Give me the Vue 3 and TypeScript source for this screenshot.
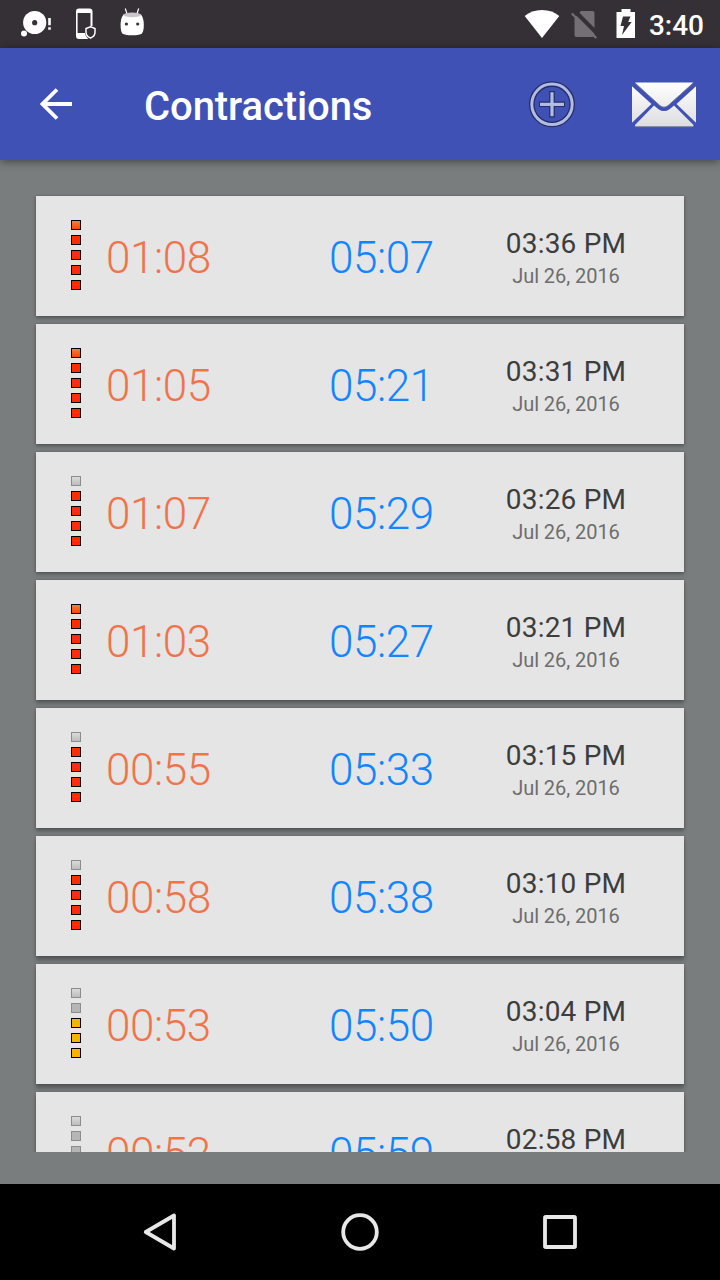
<script setup lang="ts">
type Tone = 'red' | 'amber' | 'grey'

interface Contraction {
  duration: string
  interval: string
  time: string
  date: string
  level: number
  tone: Tone
}

const METER_SIZE = 5

const contractions: Contraction[] = [
  { duration: '01:08', interval: '05:07', time: '03:36 PM', date: 'Jul 26, 2016', level: 5, tone: 'red' },
  { duration: '01:05', interval: '05:21', time: '03:31 PM', date: 'Jul 26, 2016', level: 5, tone: 'red' },
  { duration: '01:07', interval: '05:29', time: '03:26 PM', date: 'Jul 26, 2016', level: 4, tone: 'red' },
  { duration: '01:03', interval: '05:27', time: '03:21 PM', date: 'Jul 26, 2016', level: 5, tone: 'red' },
  { duration: '00:55', interval: '05:33', time: '03:15 PM', date: 'Jul 26, 2016', level: 4, tone: 'red' },
  { duration: '00:58', interval: '05:38', time: '03:10 PM', date: 'Jul 26, 2016', level: 4, tone: 'red' },
  { duration: '00:53', interval: '05:50', time: '03:04 PM', date: 'Jul 26, 2016', level: 3, tone: 'amber' },
  { duration: '00:52', interval: '05:59', time: '02:58 PM', date: 'Jul 26, 2016', level: 2, tone: 'amber' },
]

function cellTone(item: Contraction, cell: number): Tone {
  return cell > METER_SIZE - item.level ? item.tone : 'grey'
}

function cardShadow(index: number): string {
  const drop = (1.5 + index * 0.4).toFixed(1)
  return `0 ${drop}px 4px rgba(0, 0, 0, 0.3), 0 0 2px rgba(0, 0, 0, 0.22)`
}
</script>

<template>
  <div class="screen">
    <div class="status">
      <svg class="status-icons" width="150" height="48" viewBox="0 0 150 48">
        <circle cx="34.7" cy="22.5" r="11.6" fill="#fff" />
        <circle cx="34.7" cy="22.7" r="2.6" fill="#352f36" />
        <circle cx="24" cy="33.4" r="3" fill="#fff" />
        <path d="M48.2 18h2.6v7.2h-2.6zM48.2 27.2h2.6v2.6h-2.6z" fill="#fff" />
        <path d="M79 8.500h10.500a3 3 0 0 1 3 3V26h-2V13H77.600v20h7.200q.6 3.400 3.400 6H79a3 3 0 0 1-3-3V11.500a3 3 0 0 1 3-3z" fill="#fff" />
        <path d="M90.500 26.700l4.500 1.800v3.700q0 4-4.500 5.800-4.500-1.800-4.500-5.800v-3.700z" fill="#352f36" stroke="#fff" stroke-width="1.500" />
        <path d="M125.300 8.500l1.600 5M138.700 8.500l-1.600 5" stroke="#fff" stroke-width="1.200" />
        <path d="M123.500 14.500Q132.200 11.500 141 14.500 143.800 18 143.800 25 143.800 31 142 33.300 140 35.300 132.200 35.300 124.500 35.300 122.300 33.300 120.600 31 120.600 25 120.600 18 123.500 14.500z" fill="#fff" />
        <ellipse cx="132.200" cy="14.900" rx="8.700" ry="2.400" fill="#c8c6c8" />
        <circle cx="126.400" cy="24" r="1.600" fill="#352f36" />
        <circle cx="137.700" cy="24" r="1.600" fill="#352f36" />
      </svg>
      <div class="status-right">
        <svg width="36" height="48" viewBox="0 0 36 48">
          <path d="M.7 16Q7.500 10 18 10t17.300 6L18 38z" fill="#fff" />
        </svg>
        <svg width="28" height="48" viewBox="0 0 28 48">
          <path d="M10 11h11.500a2 2 0 0 1 2 2v22a2 2 0 0 1-2 2H5.500a2 2 0 0 1-2-2V18z" fill="#736f74" />
          <path d="M1.800 12l24.800 25" stroke="#352f36" stroke-width="4" transform="translate(1.500 -1.500)" />
          <path d="M.8 13.500l24.500 24.500" stroke="#736f74" stroke-width="2.300" />
        </svg>
        <svg width="20" height="48" viewBox="0 0 20 48">
          <path d="M5.500 9h9v3H19v26H.500V12h5z" fill="#fff" />
          <path d="M7 16.500h7.500l-2.300 5.500h3.500L6 35l2-9H4.500z" fill="#352f36" />
        </svg>
        <span class="clock">3:40</span>
      </div>
    </div>

    <header class="bar">
      <svg class="back" width="32" height="32" viewBox="0 0 32 32">
        <path d="M17 1.500L2.500 16 17 30.500M2 16h30" fill="none" stroke="#fff" stroke-width="3.800" />
      </svg>
      <h1 class="title">Contractions</h1>
      <svg class="add" width="48" height="48" viewBox="0 0 48 48">
        <circle cx="24" cy="24.300" r="20.200" fill="none" stroke="#232e68" stroke-width="5.600" />
        <path d="M24 11v26.500M11 24.300h26" stroke="#232e68" stroke-width="5.600" />
        <circle cx="24" cy="24.300" r="20.200" fill="none" stroke="#b4bbe2" stroke-width="3" />
        <path d="M24 12.300v24M12 24.300h24" stroke="#b4bbe2" stroke-width="3.200" />
      </svg>
      <svg class="mail" width="64" height="46" viewBox="0 0 64 46">
        <defs>
          <linearGradient id="paper" x1="0" y1="0" x2="0" y2="46" gradientUnits="userSpaceOnUse">
            <stop offset="0" stop-color="#fff" />
            <stop offset="1" stop-color="#dcdce0" />
          </linearGradient>
        </defs>
        <g fill="url(#paper)">
          <path d="M3 .5h58.300L36.500 23.200q-4.500 4-9 0z" />
          <path d="M0 4.200L19.500 22 0 40.800z" />
          <path d="M64 4.200L44.500 22 64 40.800z" />
          <path d="M22 23.500l4.500 3.700q5.500 3.700 11 0L42 23.500 61.500 43q.5 1.700-1.500 1.700H4.500q-2 0-1.500-1.700z" />
        </g>
        <path d="M3 1.500l24.500 21.700q4.500 4 9 0L61 1.500" fill="none" stroke="#707488" stroke-width=".9" />
        <path d="M3.500 44.700h57" stroke="#7c8199" stroke-width="1" />
      </svg>
    </header>

    <main class="content">
      <div class="list">
        <article v-for="(item, index) in contractions" :key="item.time" class="card" :style="{ boxShadow: cardShadow(index) }">
          <div class="meter">
            <span v-for="cell in METER_SIZE" :key="cell" class="cell" :class="[cellTone(item, cell), { top: cell === 1 }]" />
          </div>
          <span class="duration">{{ item.duration }}</span>
          <span class="interval">{{ item.interval }}</span>
          <div class="when">
            <span class="time">{{ item.time }}</span>
            <span class="date">{{ item.date }}</span>
          </div>
        </article>
      </div>
    </main>

    <nav class="nav">
      <svg width="40" height="40" viewBox="0 0 40 40">
        <path d="M34 3.500v33L5.800 20z" fill="none" stroke="#e8e8e8" stroke-width="3.800" stroke-linejoin="round" />
      </svg>
      <svg width="40" height="40" viewBox="0 0 40 40">
        <circle cx="20" cy="20" r="16.800" fill="none" stroke="#e8e8e8" stroke-width="3.800" />
      </svg>
      <svg width="40" height="40" viewBox="0 0 40 40">
        <rect x="5" y="5" width="30" height="30" rx=".8" fill="none" stroke="#e8e8e8" stroke-width="3.800" />
      </svg>
    </nav>
  </div>
</template>

<style>
body {
  margin: 0;
}
</style>

<style scoped>
.screen {
  width: 720px;
  height: 1280px;
  display: flex;
  flex-direction: column;
  overflow: hidden;
  background: #797d7d;
  font-family: Roboto, "Liberation Sans", sans-serif;
}

svg {
  display: block;
  flex: none;
}

.status {
  height: 48px;
  flex: none;
  display: flex;
  justify-content: space-between;
  background: #352f36;
}

.status-right {
  display: flex;
  padding-right: 16px;
}

.status-right svg:nth-child(2) {
  margin-left: 11px;
}

.status-right svg:nth-child(3) {
  margin-left: 17px;
}

.clock {
  margin-left: 13px;
  color: #fff;
  font-size: 28px;
  font-weight: 500;
  line-height: 51px;
}

.bar {
  z-index: 1;
  height: 112px;
  flex: none;
  box-sizing: border-box;
  display: flex;
  align-items: center;
  padding: 0 24px 0 40px;
  background: #3f51b5;
  box-shadow: 0 2px 8px rgba(0, 0, 0, 0.42);
}

.title {
  flex: 1;
  margin: 6px 0 0 72px;
  color: #fff;
  font-size: 40px;
  font-weight: 500;
  letter-spacing: -0.08px;
  line-height: 48px;
}

.mail {
  margin: 2px 0 0 56px;
}

.content {
  flex: 1;
  min-height: 0;
  padding-bottom: 32px;
}

.list {
  height: 100%;
  box-sizing: border-box;
  overflow: hidden;
  padding: 36px 36px 0;
  display: flex;
  flex-direction: column;
  gap: 8px;
}

.card {
  height: 120px;
  flex: none;
  display: grid;
  grid-template-columns: 70px 223px 157px 160px;
  align-items: start;
  background: #e5e5e5;
}

.meter {
  display: flex;
  flex-direction: column;
  gap: 5px;
  padding: 24px 0 0 35px;
}

.cell {
  width: 10px;
  height: 10px;
  box-sizing: border-box;
  border: 1px solid #000;
}

.red {
  background: #ff2d00;
}

.red.top {
  background: linear-gradient(#ff7a3c, #ff420c);
}

.amber {
  background: #ffb000;
}

.grey {
  border-color: #8d8d8d;
  background: #b5b5b5;
}

.grey.top {
  background: linear-gradient(#dadada, #bdbdbd);
}

.duration,
.interval {
  padding-top: 36px;
  font-size: 44px;
  font-weight: 300;
  letter-spacing: -0.4px;
  line-height: 52px;
}

.duration {
  color: #f2734a;
}

.interval {
  color: #1086ff;
}

.when {
  display: flex;
  flex-direction: column;
  align-items: center;
  padding-top: 31px;
}

.time {
  color: #3d3d3d;
  font-size: 28px;
  letter-spacing: 0.2px;
  line-height: 33px;
}

.date {
  color: #6d6d6d;
  font-size: 20px;
  letter-spacing: -0.05px;
  line-height: 33px;
}

.nav {
  height: 96px;
  flex: none;
  display: flex;
  align-items: center;
  justify-content: center;
  gap: 160px;
  background: #000;
}
</style>
